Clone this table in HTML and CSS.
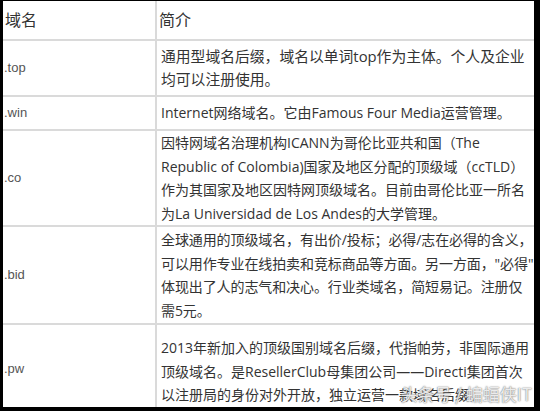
FILE: index.html
```html
<!DOCTYPE html>
<html lang="zh-CN">
<head>
  <meta charset="UTF-8" />
  <title>域名简介</title>
  <link rel="stylesheet" href="styles.css">
</head>
<body>
  <div class="frame">
    <table class="domains">
      <colgroup>
        <col class="col-first">
        <col>
      </colgroup>
      <thead>
        <tr class="row-head">
          <th class="col-name">域名</th>
          <th>简介</th>
        </tr>
      </thead>
      <tbody>
        <tr class="row-top">
          <td class="col-name">.top</td>
          <td>通用型域名后缀，域名以单词top作为主体。个人及企业<br>均可以注册使用。</td>
        </tr>
        <tr class="row-win">
          <td class="col-name">.win</td>
          <td>Internet网络域名。它由Famous Four Media运营管理。</td>
        </tr>
        <tr class="row-co">
          <td class="col-name">.co</td>
          <td>因特网域名治理机构ICANN为哥伦比亚共和国（The<br>Republic of Colombia)国家及地区分配的顶级域（ccTLD）<br>作为其国家及地区因特网顶级域名。目前由哥伦比亚一所名<br>为La Universidad de Los Andes的大学管理。</td>
        </tr>
        <tr class="row-bid">
          <td class="col-name">.bid</td>
          <td>全球通用的顶级域名，有出价/投标；必得/志在必得的含义，<br>可以用作专业在线拍卖和竞标商品等方面。另一方面，"必得"<br>体现出了人的志气和决心。行业类域名，简短易记。注册仅<br>需5元。</td>
        </tr>
        <tr class="row-pw">
          <td class="col-name">.pw</td>
          <td>2013年新加入的顶级国别域名后缀，代指帕劳，非国际通用<br>顶级域名。是ResellerClub母集团公司——Directi集团首次<br>以注册局的身份对外开放，独立运营一款域名后缀。</td>
        </tr>
      </tbody>
    </table>
    <div class="watermark">头条号 / 蝙蝠侠IT</div>
  </div>
</body>
</html>
```

FILE: styles.css
```css
html {
  background: #000;
}
body {
  margin: 0;
  height: 411px;
  overflow: hidden;
}
.frame {
  position: relative;
  margin: 1px 6px 0 3px;
  height: 406px;
  background: #fff;
  overflow: hidden;
}
.domains {
  width: 100%;
  table-layout: fixed;
  border-collapse: collapse;
  font-family: "Open Sans", "Noto Sans CJK SC", sans-serif;
  font-size: 14px;
  line-height: 23.5px;
  color: #333;
}
.col-first {
  width: 153px;
}
.domains th,
.domains td {
  border: 2px solid #dadada;
  padding: 0 0 0 4px;
  text-align: left;
  vertical-align: middle;
  white-space: nowrap;
}
.domains tr:first-child th {
  border-top: none;
}
.domains th:first-child,
.domains td:first-child {
  border-left: none;
}
.domains th:last-child,
.domains td:last-child {
  border-right: none;
}
.domains tbody tr:last-child td {
  border-bottom: none;
}
.domains th {
  font-family: "Noto Sans CJK SC", sans-serif;
  font-size: 16px;
  font-weight: normal;
  color: #333;
  padding-left: 2px;
}
.col-name {
  font-family: "Liberation Sans", Arial, sans-serif;
  font-size: 13px;
  color: #555;
}
td.col-name {
  padding-left: 1px;
  font-size: 13px;
}
.row-head { height: 39px; }
.row-top { height: 56px; font-size: 14.8px; }
.row-win { height: 34px; }
.row-co { height: 92px; }
.row-bid { height: 98px; }
.row-bid td { letter-spacing: -0.1px; }
.row-pw td { vertical-align: top; padding-top: 11px; }
.row-pw td.col-name { padding-top: 32px; }
.watermark {
  position: absolute;
  right: 2px;
  bottom: 1px;
  font-family: "Noto Sans CJK SC", sans-serif;
  font-size: 17px;
  color: rgba(255, 255, 255, 0.85);
  text-shadow: 0 0 1px #777, 0 0 2px #999;
}
```
